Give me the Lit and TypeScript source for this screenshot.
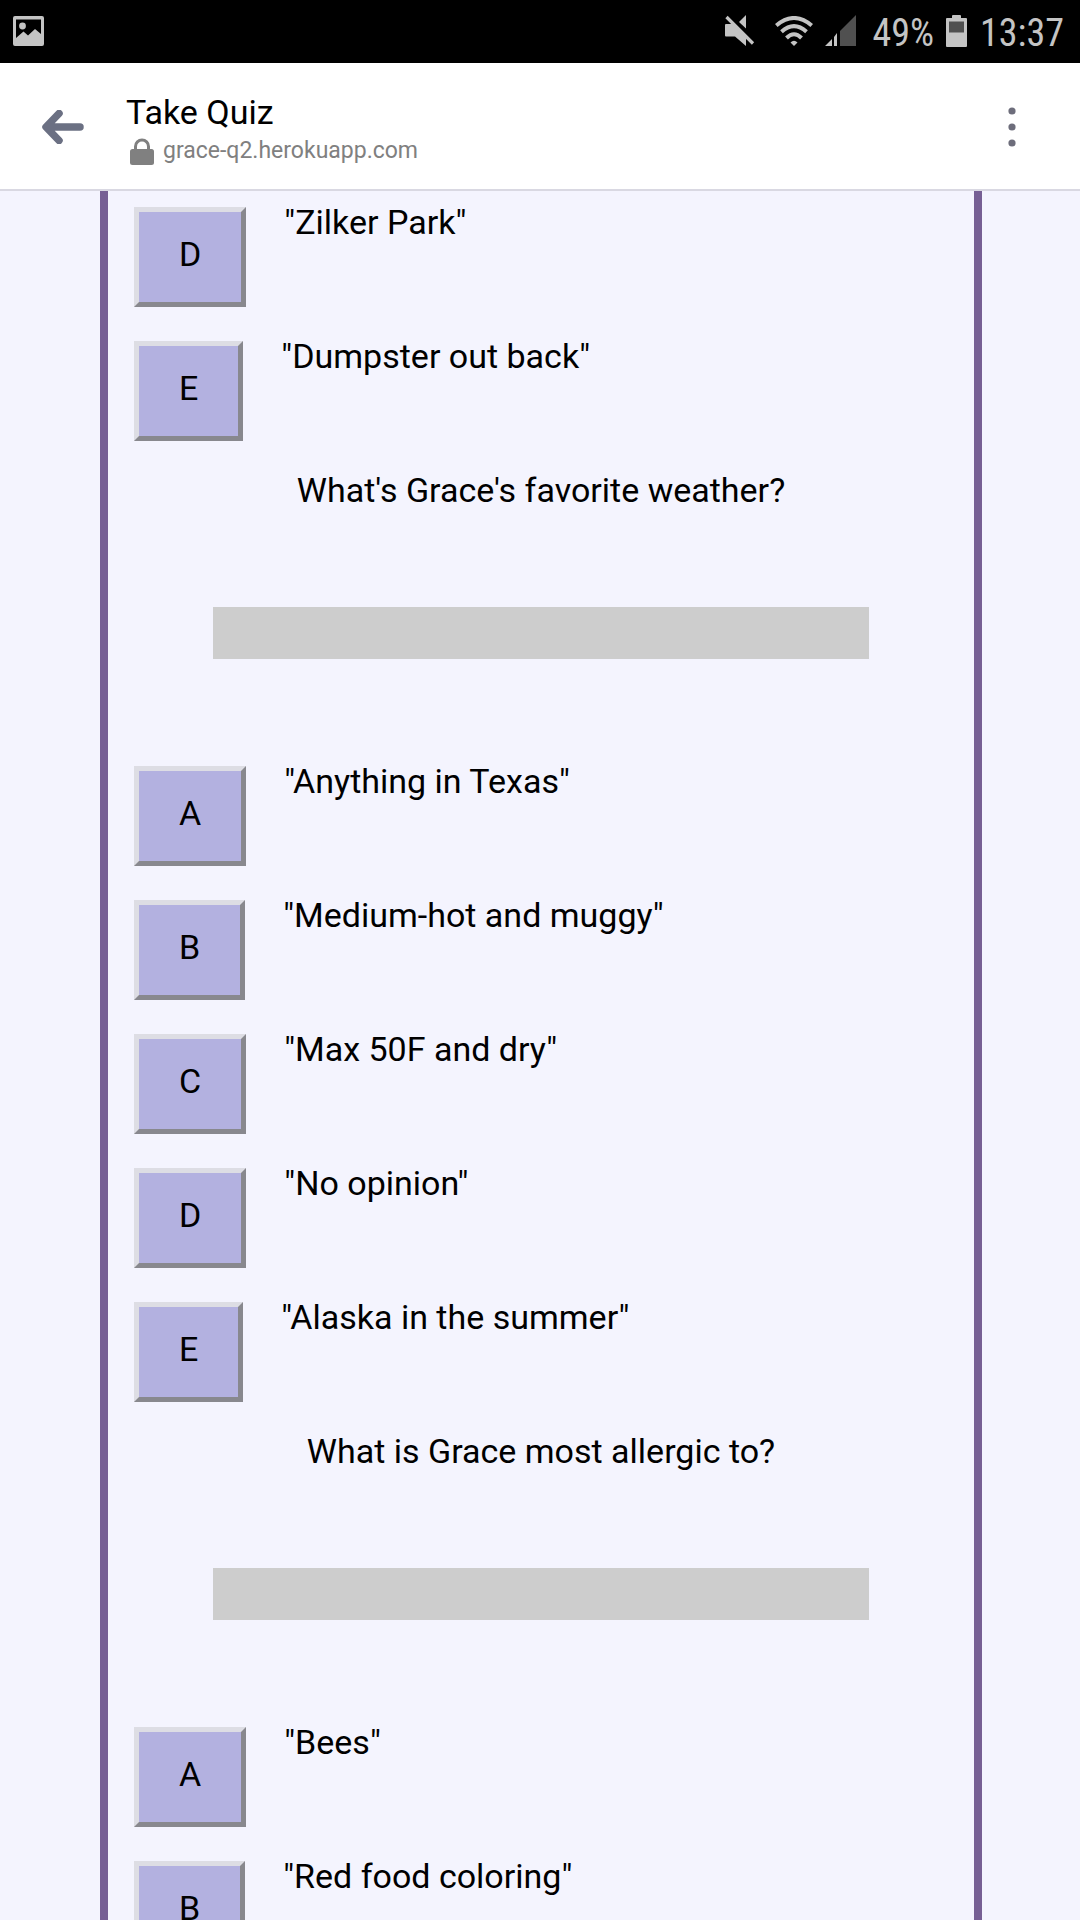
import { LitElement, html, css, svg } from "lit";
import { customElement, property, state } from "lit/decorators.js";

interface Choice {
  letter: string;
  text: string;
}

interface Question {
  prompt?: string;
  choices: Choice[];
}

const QUESTIONS: Question[] = [
  {
    choices: [
      { letter: "D", text: "Zilker Park" },
      { letter: "E", text: "Dumpster out back" },
    ],
  },
  {
    prompt: "What's Grace's favorite weather?",
    choices: [
      { letter: "A", text: "Anything in Texas" },
      { letter: "B", text: "Medium-hot and muggy" },
      { letter: "C", text: "Max 50F and dry" },
      { letter: "D", text: "No opinion" },
      { letter: "E", text: "Alaska in the summer" },
    ],
  },
  {
    prompt: "What is Grace most allergic to?",
    choices: [
      { letter: "A", text: "Bees" },
      { letter: "B", text: "Red food coloring" },
    ],
  },
];

@customElement("status-bar")
export class StatusBar extends LitElement {
  static styles = css`
    :host {
      display: flex;
      align-items: center;
      justify-content: space-between;
      box-sizing: border-box;
      height: 63px;
      padding: 0 16px 2px 13px;
      background: #000;
      color: #c4c4c4;
      font-family: "Roboto Condensed", Roboto, sans-serif;
      font-size: 38px;
      line-height: 40px;
    }
    svg {
      display: block;
    }
    .tray {
      display: flex;
      align-items: center;
    }
    .indicators {
      display: flex;
      align-items: center;
      gap: 12px;
      padding-right: 17px;
    }
    .reading {
      padding-top: 4px;
    }
    .battery {
      padding: 0 12px;
    }
  `;

  render() {
    return html`
      <svg width="31" height="30" viewBox="0 0 31 30" aria-hidden="true">
        <path fill="#c4c4c4" fill-rule="evenodd" d="M2 0H29Q31 0 31 2V28Q31 30 29 30H2Q0 30 0 28V2Q0 0 2 0ZM3 3.500V22L10.500 15.500L15 19.500L22 13L28 18V3.500Z"/>
        <circle cx="9.500" cy="10" r="3.400" fill="#c4c4c4"/>
      </svg>
      <div class="tray">
        <div class="indicators">
          <svg width="38" height="32" viewBox="0 0 38 32" aria-hidden="true">
            <g fill="#c4c4c4">
              <path d="M1 9H8L21 23V31L10 21.500H1Q0 21.500 0 20.500V10Q0 9 1 9Z"/>
              <path d="M21 0V13.500L14 7Z"/>
            </g>
            <path d="M1.500 2L28 28.500" stroke="#c4c4c4" stroke-width="3.200"/>
          </svg>
          <svg width="38" height="30" viewBox="0 0 38 30" aria-hidden="true">
            <g fill="none" stroke="#c4c4c4" stroke-width="4">
              <path d="M1.300 9.500Q19 -5.500 36.700 9.500"/>
              <path d="M6.500 15.800Q19 4.500 31.500 15.800"/>
              <path d="M11.500 22Q19 14.500 26.500 22"/>
            </g>
            <path fill="#c4c4c4" d="M19 30L15.500 26.500Q19 23 22.500 26.500Z"/>
          </svg>
          <svg width="31" height="31" viewBox="0 0 31 31" aria-hidden="true">
            <path fill="#505050" d="M31 0V31H15V16Z"/>
            <path fill="#c4c4c4" d="M0 31L7 24V31ZM9 22L12 18V31H9Z"/>
          </svg>
        </div>
        <span class="reading">49%</span>
        <svg class="battery" width="22" height="32" viewBox="0 0 22 32" aria-hidden="true">
          <path fill="#c4c4c4" d="M6 1Q6 0 7 0H14Q15 0 15 1V3H20Q21 3 21 4V31Q21 32 20 32H1Q0 32 0 31V4Q0 3 1 3H6Z"/>
          <path fill="#505050" d="M3 6.500H18V17.500H3Z"/>
        </svg>
        <time class="reading">13:37</time>
      </div>
    `;
  }
}

@customElement("page-header")
export class PageHeader extends LitElement {
  @property() heading = "";
  @property() address = "";

  static styles = css`
    :host {
      display: flex;
      align-items: center;
      box-sizing: border-box;
      height: 128px;
      padding: 2px 39px 0 34px;
      background: #fff;
      border-bottom: 2px solid #d9d8e2;
      font-family: Roboto, sans-serif;
    }
    button {
      display: flex;
      align-items: center;
      justify-content: center;
      width: 58px;
      height: 72px;
      padding: 0;
      border: 0;
      background: none;
    }
    svg {
      display: block;
    }
    .titles {
      flex: 1;
      padding: 8px 34px 0;
    }
    h1 {
      margin: 0;
      color: #000;
      font-size: 34px;
      font-weight: 400;
      line-height: 40px;
    }
    .address {
      display: flex;
      align-items: center;
      gap: 9px;
      margin: 0;
      padding-left: 4px;
      color: #808080;
      font-size: 23px;
      line-height: 38px;
    }
  `;

  render() {
    return html`
      <button type="button" aria-label="Back">
        <svg width="42" height="34" viewBox="0 0 42 34">
          <path d="M17 3.500L4 17L17 30.500M5 17H38" fill="none" stroke="#6b7083" stroke-width="7.500" stroke-linecap="round" stroke-linejoin="round"/>
        </svg>
      </button>
      <div class="titles">
        <h1>${this.heading}</h1>
        <p class="address">
          <svg width="24" height="27" viewBox="0 0 24 27" aria-hidden="true">
            <path d="M5.500 11V8.500A6.500 6.500 0 0 1 18.500 8.500V11" fill="none" stroke="#808080" stroke-width="3"/>
            <rect y="11" width="24" height="16" rx="2.500" fill="#808080"/>
          </svg>
          <span>${this.address}</span>
        </p>
      </div>
      <button type="button" aria-label="More options">
        <svg width="8" height="40" viewBox="0 0 8 40" fill="#6d6d7b">
          ${[4, 20, 36].map((y) => svg`<circle cx="4" cy=${y} r="3.600"/>`)}
        </svg>
      </button>
    `;
  }
}

@customElement("quiz-question")
export class QuizQuestion extends LitElement {
  @property({ attribute: false }) question: Question = { choices: [] };
  @state() private picked = "";

  static styles = css`
    :host {
      display: block;
      color: #000;
      font-family: Roboto, sans-serif;
      font-size: 34px;
      line-height: 40px;
    }
    h2 {
      margin: 0;
      font-size: 34px;
      font-weight: 400;
      line-height: 40px;
      text-align: center;
    }
    .divider {
      width: 656px;
      max-width: 80%;
      height: 52px;
      margin: 97px auto 102px;
      background: #cdcdcd;
    }
    .choices {
      display: flex;
      flex-direction: column;
      gap: 29px;
      margin: 0;
      padding: 0 26px 29px;
      list-style: none;
    }
    .choice {
      display: flex;
      align-items: flex-start;
      gap: 38px;
    }
    button {
      flex: none;
      height: 100px;
      margin: 5px 0 0;
      padding: 0 40px 6px;
      border: 5px solid;
      border-color: #dddde4 #88888e #88888e #dddde4;
      border-radius: 0;
      background: #b3b1e0;
      color: #000;
      font: inherit;
    }
  `;

  render() {
    const { prompt, choices } = this.question;
    return html`
      ${prompt ? html`<h2>${prompt}</h2><div class="divider"></div>` : ""}
      <ul class="choices">
        ${choices.map(
          ({ letter, text }) => html`
            <li class="choice">
              <button
                type="button"
                aria-describedby="text-${letter}"
                aria-pressed=${this.picked === letter ? "true" : "false"}
                @click=${() => (this.picked = letter)}
              >${letter}</button>
              <span id="text-${letter}">"${text}"</span>
            </li>
          `
        )}
      </ul>
    `;
  }
}

@customElement("app-root")
export class AppRoot extends LitElement {
  static styles = css`
    :host {
      display: flex;
      flex-direction: column;
      height: 100vh;
      overflow: hidden;
      background: #f4f4fe;
    }
    status-bar,
    page-header {
      flex: none;
    }
    .viewport {
      flex: 1;
      min-height: 0;
      overflow: auto;
      scrollbar-width: none;
    }
    .quiz {
      box-sizing: border-box;
      min-height: 100%;
      margin: 0 98px 0 100px;
      padding-top: 11px;
      border: solid #765f94;
      border-width: 0 8px;
    }
  `;

  render() {
    return html`
      <status-bar></status-bar>
      <page-header heading="Take Quiz" address="grace-q2.herokuapp.com"></page-header>
      <main class="viewport">
        <div class="quiz">
          ${QUESTIONS.map((q) => html`<quiz-question .question=${q}></quiz-question>`)}
        </div>
      </main>
    `;
  }
}
